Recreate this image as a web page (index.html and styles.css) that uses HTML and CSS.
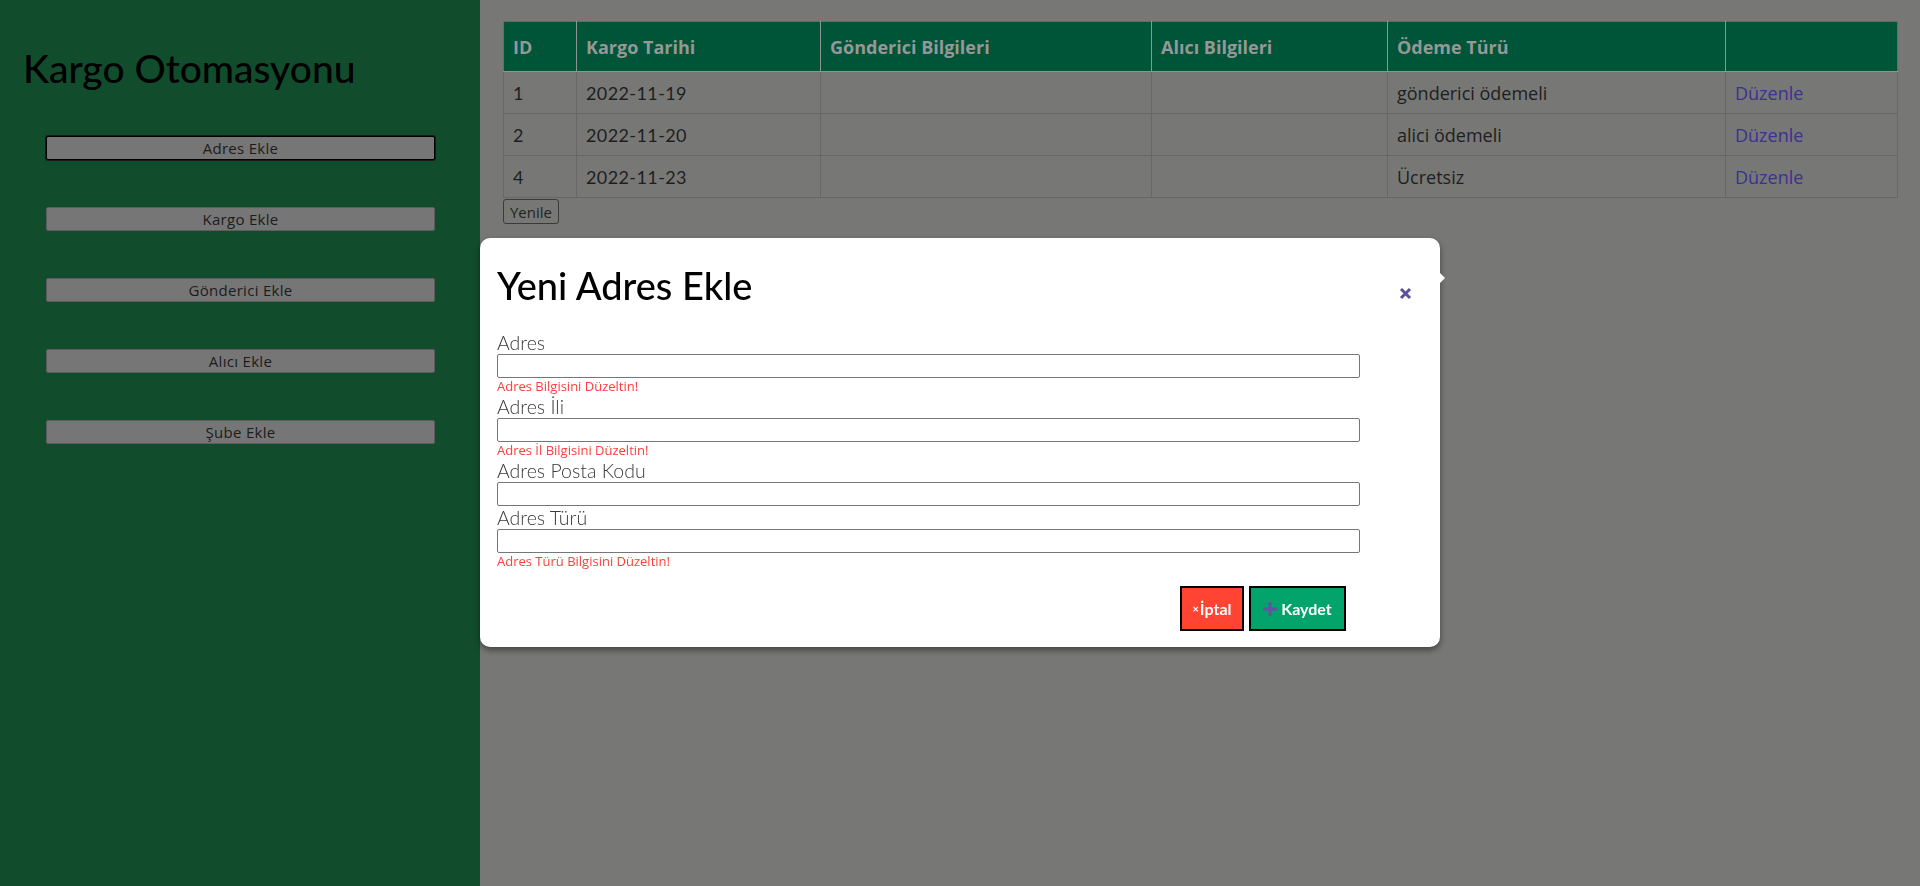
FILE: index.html
```html
<!DOCTYPE html>
<html lang="tr">
<head>
<meta charset="utf-8">
<title>Kargo Otomasyonu</title>
<link rel="stylesheet" href="styles.css">
</head>
<body>
<div class="app">
  <aside class="sidebar">
    <h1 class="brand">Kargo Otomasyonu</h1>
    <nav class="side-nav">
      <button class="side-btn is-focused" type="button">Adres Ekle</button>
      <button class="side-btn" type="button">Kargo Ekle</button>
      <button class="side-btn" type="button">Gönderici Ekle</button>
      <button class="side-btn" type="button">Alıcı Ekle</button>
      <button class="side-btn" type="button">Şube Ekle</button>
    </nav>
  </aside>
  <main class="main">
    <table class="cargo-table">
      <colgroup>
        <col class="c-id"><col class="c-date"><col class="c-sender"><col class="c-recv"><col class="c-pay"><col class="c-act">
      </colgroup>
      <thead>
        <tr><th>ID</th><th>Kargo Tarihi</th><th>Gönderici Bilgileri</th><th>Alıcı Bilgileri</th><th>Ödeme Türü</th><th></th></tr>
      </thead>
      <tbody>
        <tr><td class="num-cell">1</td><td class="num-cell">2022-11-19</td><td></td><td></td><td>gönderici ödemeli</td><td><a class="edit-link" href="#">Düzenle</a></td></tr>
        <tr><td class="num-cell">2</td><td class="num-cell">2022-11-20</td><td></td><td></td><td>alici ödemeli</td><td><a class="edit-link" href="#">Düzenle</a></td></tr>
        <tr><td class="num-cell">4</td><td class="num-cell">2022-11-23</td><td></td><td></td><td>Ücretsiz</td><td><a class="edit-link" href="#">Düzenle</a></td></tr>
      </tbody>
    </table>
    <button class="refresh-btn" type="button">Yenile</button>
  </main>
</div>

<div class="backdrop">
  <div class="modal">
    <div class="modal-header">
      <h2 class="modal-title">Yeni Adres Ekle</h2>
      <button class="close-btn" type="button" aria-label="Kapat">
        <svg width="13" height="13" viewBox="0 0 13 13"><path d="M2 2 L11 11 M11 2 L2 11" stroke="#5e4f99" stroke-width="3"/></svg>
      </button>
    </div>
    <form class="modal-form">
      <label class="field-label">Adres</label>
      <input class="field-input" type="text">
      <div class="field-error">Adres Bilgisini Düzeltin!</div>
      <label class="field-label">Adres İli</label>
      <input class="field-input" type="text">
      <div class="field-error">Adres İl Bilgisini Düzeltin!</div>
      <label class="field-label">Adres Posta Kodu</label>
      <input class="field-input" type="text">
      <label class="field-label">Adres Türü</label>
      <input class="field-input" type="text">
      <div class="field-error">Adres Türü Bilgisini Düzeltin!</div>
      <div class="modal-footer">
        <button class="btn btn-cancel" type="button"><span class="btn-x">×</span>İptal</button>
        <button class="btn btn-save" type="button">
          <svg class="plus-icon" width="14" height="14" viewBox="0 0 14 14"><path d="M7 0 V14 M0 7 H14" stroke="#6a4fa0" stroke-width="3"/></svg>Kaydet
        </button>
      </div>
    </form>
  </div>
</div>
</body>
</html>
```

FILE: styles.css
```css
* { box-sizing: border-box; }

html, body {
  margin: 0;
  padding: 0;
  height: 100%;
}

body {
  font-family: "Lato", "Noto Sans", sans-serif;
  background: #777876;
  color: #222;
  overflow: hidden;
}

.app {
  display: flex;
  height: 886px;
}

.sidebar {
  width: 480px;
  flex: none;
  background: #114d2d;
  display: flex;
  flex-direction: column;
}

.brand {
  margin: 45px 0 0 23px;
  font-size: 39px;
  line-height: 46px;
  font-weight: 500;
  color: #000;
}

.side-nav {
  display: flex;
  flex-direction: column;
  align-items: center;
  gap: 47px;
  margin-top: 45px;
}

.side-btn {
  width: 389px;
  height: 24px;
  margin-left: 1px;
  padding: 0;
  background: #767676;
  border: 1px solid #5d5d5d;
  border-radius: 2px;
  font-family: "Open Sans", "Lato", sans-serif;
  font-size: 15px;
  letter-spacing: 0.3px;
  color: #1c1c1c;
}

.side-btn.is-focused {
  border: 1px solid #000;
  box-shadow: 0 0 0 1px #1a1a1a;
}

.main {
  flex: 1;
  padding: 21px 23px;
}

.cargo-table {
  width: 1394px;
  border-collapse: collapse;
  table-layout: fixed;
  font-family: "Open Sans", "Lato", sans-serif;
  font-size: 18px;
}

.c-id { width: 73px; }
.c-date { width: 244px; }
.c-sender { width: 331px; }
.c-recv { width: 236px; }
.c-pay { width: 338px; }
.c-act { width: 172px; }

.cargo-table th {
  height: 50px;
  background: #005438;
  color: #959896;
  font-weight: 700;
  font-size: 18px;
  text-align: left;
  padding: 0 9px;
  border: 1px solid #8a9690;
  border-top-color: #6a6a6a;
}

.cargo-table th:first-child { border-left-color: #6a6a6a; }
.cargo-table th:last-child { border-right-color: #6a6a6a; }

.cargo-table td {
  height: 42px;
  padding: 0 9px;
  border: 1px solid #676767;
  color: #1e1e1e;
  font-weight: 400;
}

.cargo-table .num-cell {
  font-family: "Lato", "Open Sans", sans-serif;
  letter-spacing: 0.4px;
}

.edit-link {
  color: #3b3192;
  text-decoration: none;
}

.refresh-btn {
  display: block;
  width: 56px;
  height: 25px;
  margin-top: 1px;
  padding: 0;
  background: #777876;
  border: 1px solid #3a3a3a;
  border-radius: 3px;
  font-family: "Open Sans", "Lato", sans-serif;
  font-size: 15px;
  color: #232323;
}

.backdrop {
  position: fixed;
  inset: 0;
  display: flex;
  justify-content: center;
  align-items: flex-start;
  padding-top: 238px;
}

.modal {
  position: relative;
  width: 960px;
  background: #fff;
  border-radius: 10px;
  padding: 24px 27px 16px 17px;
  box-shadow: 0 3px 6px rgba(0, 0, 0, 0.45);
}

.modal::after {
  content: "";
  position: absolute;
  right: -5px;
  top: 35px;
  border-left: 5px solid #fff;
  border-top: 5px solid transparent;
  border-bottom: 5px solid transparent;
}

.modal-header {
  display: flex;
  justify-content: space-between;
  align-items: flex-start;
  height: 46px;
}

.modal-title {
  margin: 0;
  font-size: 38px;
  line-height: 46px;
  font-weight: 500;
  color: #000;
}

.close-btn {
  margin-top: 24px;
  width: 16px;
  height: 14px;
  padding: 0;
  border: 0;
  background: none;
  display: flex;
  align-items: center;
  justify-content: center;
}

.modal-form {
  display: flex;
  flex-direction: column;
  align-items: flex-start;
  margin-top: 23px;
}

.field-label {
  font-size: 19.5px;
  line-height: 23px;
  font-weight: 300;
  color: #3a3a3a;
}

.field-input {
  width: 863px;
  height: 24px;
  margin: 0;
  border: 1px solid #767676;
  border-radius: 2px;
  font-family: inherit;
}

.field-error {
  font-family: "Open Sans", "Lato", sans-serif;
  font-size: 13px;
  line-height: 17px;
  color: #ff3d3d;
  font-weight: 400;
}

.modal-footer {
  display: flex;
  justify-content: flex-end;
  gap: 5px;
  width: 863px;
  padding-right: 14px;
  margin-top: 16px;
}

.btn {
  height: 45px;
  border: 2px solid #000;
  border-radius: 0;
  padding: 0;
  font-family: inherit;
  font-size: 16px;
  font-weight: 700;
  color: #fff;
  display: flex;
  align-items: center;
  justify-content: center;
}

.btn-cancel {
  width: 64px;
  background: #ff4434;
}

.btn-x {
  font-size: 11px;
  margin-right: 1px;
}

.btn-save {
  width: 97px;
  background: #03a36c;
  gap: 4px;
}
```
